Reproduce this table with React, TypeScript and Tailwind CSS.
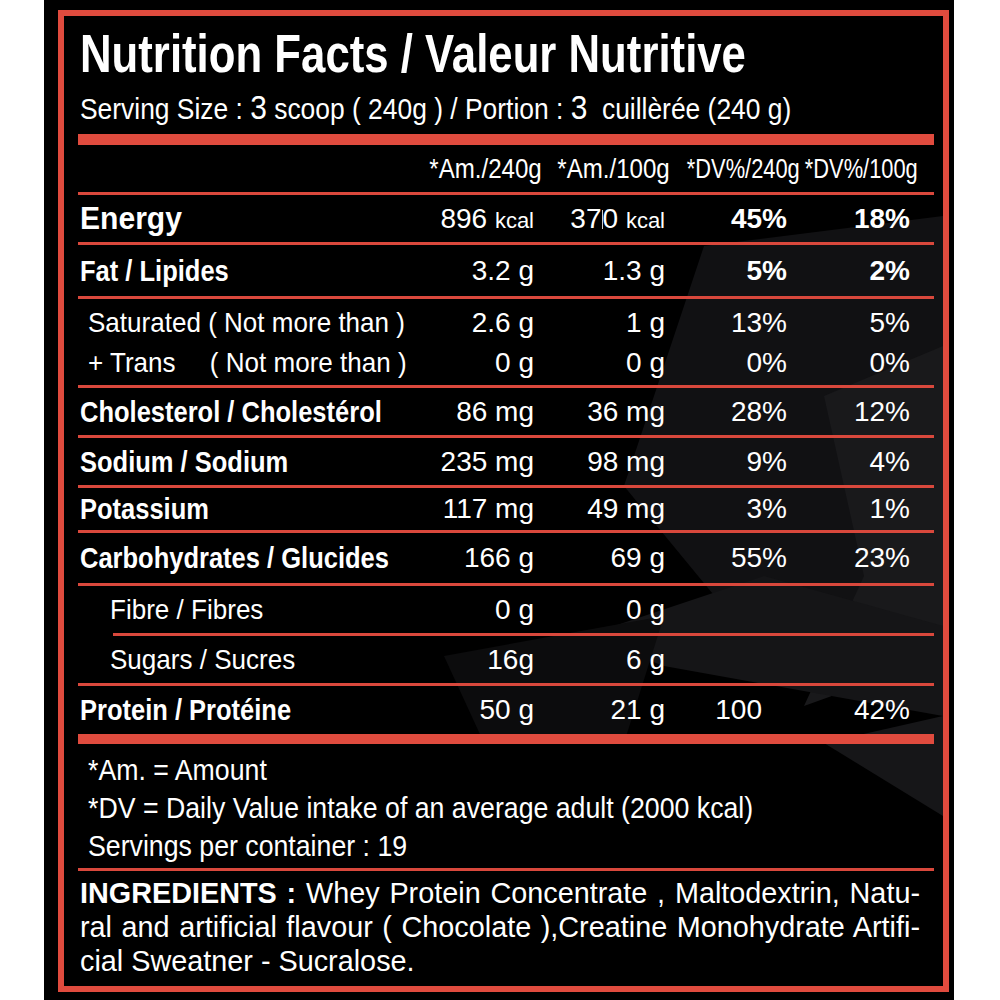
import React from 'react';

const font = "font-['Liberation_Sans','Arimo',Arial,sans-serif]";
const cols = 'grid grid-cols-[342px_114px_131px_122px_123px_24px]';

// Helvetica Condensed isn't available, so narrow Liberation Sans horizontally
function C({ s, right, children }: { s: string; right?: boolean; children: React.ReactNode }) {
  return (
    <span className={`inline-block whitespace-nowrap ${right ? 'origin-right' : 'origin-left'} ${s}`}>
      {children}
    </span>
  );
}

function Line({ indent = '' }: { indent?: string }) {
  return <div className={`h-[3px] bg-[#d9483c] ${indent}`} />;
}

type RowProps = {
  h: string;
  label: React.ReactNode;
  cells: React.ReactNode[];
  boldPct?: boolean;
  lineIndent?: string;
};

function Row({ h, label, cells, boldPct, lineIndent }: RowProps) {
  return (
    <>
      <div className={`${cols} ${h} items-center`}>
        {label}
        {cells.map((c, i) => (
          <div key={i} className={`text-right text-[28px] ${boldPct && i >= 2 ? 'font-bold' : ''}`}>
            {c}
          </div>
        ))}
        <div />
      </div>
      <Line indent={lineIndent} />
    </>
  );
}

const Label = ({ children }: { children: React.ReactNode }) => (
  <div className="pl-[2px] text-[30px] font-bold">
    <C s="scale-x-[0.85]">{children}</C>
  </div>
);

const Sub = ({ children }: { children: React.ReactNode }) => (
  <div className="pl-[32px] text-[28px]">
    <C s="scale-x-[0.93]">{children}</C>
  </div>
);

export default function App() {
  return (
    <div className={`w-full h-[1000px] bg-white flex ${font}`}>
      <div className="ml-[44px] w-[910px] h-full bg-black pl-[14px] pr-[5px] pt-[10px] pb-[8px]">
        <div className="relative h-full border-[6px] border-[#e04b3e] pl-[14px] pr-[9px] text-white leading-none">
          {/* faint geometric background */}
          <svg className="absolute inset-0 w-full h-full" viewBox="0 0 879 970" preserveAspectRatio="none">
            <polygon points="640,230 879,200 879,560 700,640 560,470" fill="#111113" />
            <polygon points="760,380 879,330 879,640 740,690 800,560" fill="#19191b" />
            <polygon points="520,620 700,560 879,610 879,700 600,650" fill="#151517" />
            <polygon points="760,727 879,700 879,800" fill="#161618" />
            <polygon points="380,640 600,600 560,727 420,727" fill="#0c0c0d" />
          </svg>

          <div className="relative">
            <h1 className="mt-[10px] pl-[2px] text-[54px] font-bold leading-none">
              <C s="scale-x-[0.81]">Nutrition Facts / Valeur Nutritive</C>
            </h1>
            <div className="mt-[12px] pl-[2px] text-[30px] leading-[30px]">
              <C s="scale-x-[0.88]">
                Serving Size : <span className="text-[34px]">3</span> scoop ( 240g ) / Portion :{' '}
                <span className="text-[34px]">3</span>&nbsp; cuillèrée (240 g)
              </C>
            </div>
            <div className="mt-[10px] h-[11px] bg-[#e04b3e]" />

            {/* column headers */}
            <div className={`${cols} h-[47px] items-center text-[28px]`}>
              <div />
              <div className="flex justify-end -mr-[8px]"><C right s="scale-x-[0.86]">*Am./240g</C></div>
              <div className="flex justify-end -mr-[5px]"><C right s="scale-x-[0.86]">*Am./100g</C></div>
              <div className="flex justify-end -mr-[13px]"><C right s="scale-x-[0.78]">*DV%/240g</C></div>
              <div className="flex justify-end -mr-[8px]"><C right s="scale-x-[0.78]">*DV%/100g</C></div>
              <div />
            </div>
            <Line />

            <Row
              h="h-[47px]"
              label={
                <div className="pl-[2px] text-[31px] font-bold">
                  <C s="scale-x-[0.97]">Energy</C>
                </div>
              }
              boldPct
              cells={[
                <>896 <span className="text-[22px]">kcal</span></>,
                <>37<span className="inline-block w-px h-[19px] bg-white/80 align-[-1px]" />0 <span className="text-[22px]">kcal</span></>,
                '45%',
                '18%',
              ]}
            />
            <Row h="h-[51px]" label={<Label>Fat / Lipides</Label>} boldPct cells={['3.2 g', '1.3 g', '5%', '2%']} />

            <div className={`${cols} h-[86px] pt-[10px] gap-y-[12px] content-start text-[28px]`}>
              <div className="pl-[10px]">
                <C s="scale-x-[0.93]">Saturated ( Not more than )</C>
              </div>
              <div className="text-right">2.6 g</div>
              <div className="text-right">1 g</div>
              <div className="text-right">13%</div>
              <div className="text-right">5%</div>
              <div />
              <div className="pl-[10px]">
                <C s="scale-x-[0.93]">
                  <span className="inline-block w-[131px]">+ Trans</span>( Not more than )
                </C>
              </div>
              <div className="text-right">0 g</div>
              <div className="text-right">0 g</div>
              <div className="text-right">0%</div>
              <div className="text-right">0%</div>
              <div />
            </div>
            <Line />

            <Row h="h-[47px]" label={<Label>Cholesterol / Cholestérol</Label>} cells={['86 mg', '36 mg', '28%', '12%']} />
            <Row h="h-[47px]" label={<Label>Sodium / Sodium</Label>} cells={['235 mg', '98 mg', '9%', '4%']} />
            <Row h="h-[42px]" label={<Label>Potassium</Label>} cells={['117 mg', '49 mg', '3%', '1%']} />
            <Row h="h-[50px]" label={<Label>Carbohydrates / Glucides</Label>} cells={['166 g', '69 g', '55%', '23%']} />
            <Row h="h-[47px]" label={<Sub>Fibre / Fibres</Sub>} cells={['0 g', '0 g', '', '']} lineIndent="ml-[35px]" />
            <Row h="h-[47px]" label={<Sub>Sugars / Sucres</Sub>} cells={['16g', '6 g', '', '']} />

            <div className={`${cols} h-[48px] items-center text-[28px]`}>
              <Label>Protein / Protéine</Label>
              <div className="text-right">50 g</div>
              <div className="text-right">21 g</div>
              <div className="text-right pr-[25px]">100</div>
              <div className="text-right">42%</div>
              <div />
            </div>
            <div className="h-[10px] bg-[#e04b3e]" />

            <div className="pl-[10px] pt-[7px] pb-[3px] text-[30px] leading-[38px]">
              <div><C s="scale-x-[0.89]">*Am. = Amount</C></div>
              <div><C s="scale-x-[0.89]">*DV = Daily Value intake of an average adult (2000 kcal)</C></div>
              <div><C s="scale-x-[0.89]">Servings per container : 19</C></div>
            </div>
            <Line />

            <div className="pt-[5px] pl-[2px]">
              <div className="w-[875px] origin-left scale-x-[0.96] text-[30px] leading-[34px]">
                <div className="text-justify [text-align-last:justify] whitespace-nowrap">
                  <b>INGREDIENTS :</b> Whey Protein Concentrate , Maltodextrin, Natu-
                </div>
                <div className="text-justify [text-align-last:justify] whitespace-nowrap">
                  ral and artificial flavour ( Chocolate ),Creatine Monohydrate Artifi-
                </div>
                <div className="whitespace-nowrap">cial Sweatner - Sucralose.</div>
              </div>
            </div>
          </div>
        </div>
      </div>
    </div>
  );
}
